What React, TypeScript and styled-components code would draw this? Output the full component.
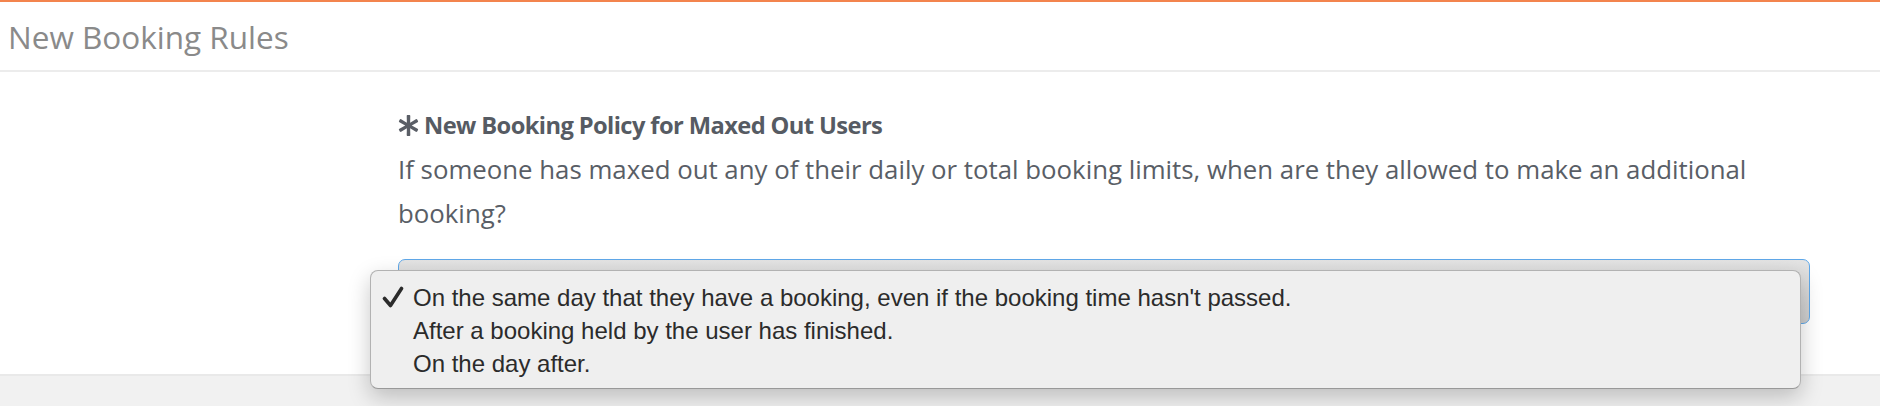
import React from "react";
import styled, { createGlobalStyle } from "styled-components";
import { FaAsterisk } from "react-icons/fa";

const Global = createGlobalStyle`
  html, body { margin: 0; padding: 0; background: #ffffff; }
  body { font-family: "Open Sans", "Liberation Sans", sans-serif; }
`;

const Page = styled.div`
  width: 1880px;
  height: 406px;
  display: flex;
  flex-direction: column;
  overflow: hidden;
  background: #f1f1f1;
`;

const Panel = styled.section`
  background: #ffffff;
  border-top: 2px solid #f3844e;
  border-bottom: 2px solid #e9e9e9;
`;

const Header = styled.header`
  height: 68px;
  display: flex;
  align-items: center;
  padding-left: 8px;
  border-bottom: 2px solid #ececec;
  font-family: "Open Sans", sans-serif;
  font-size: 31.5px;
  color: #8a8a8a;
`;

const Body = styled.div`
  display: grid;
  grid-template-columns: 398px 1412px 1fr;
  padding-top: 39px;
  padding-bottom: 50px;
`;

const Field = styled.div`
  grid-column: 2;
  display: flex;
  flex-direction: column;
`;

const Label = styled.label`
  display: flex;
  align-items: center;
  gap: 5px;
  height: 28px;
  font-family: "Open Sans", sans-serif;
  font-weight: 700;
  font-size: 23.7px;
  letter-spacing: -0.6px;
  color: #565b63;
`;

const Help = styled.p`
  margin: 8px 0 24px;
  font-family: "Open Sans", sans-serif;
  font-size: 25.8px;
  line-height: 44px;
  color: #595e66;
`;

const SelectBox = styled.div`
  position: relative;
  height: 63px;
  border: 1px solid #5fa8e9;
  border-radius: 7px;
  background: linear-gradient(#e4e4e4, #cdcdcd);
`;

const Menu = styled.ul`
  position: absolute;
  left: -29px;
  right: 8px;
  top: 10px;
  margin: 0;
  padding: 10px 0 8px;
  list-style: none;
  background: #efefef;
  border: 1px solid #b2b2b2;
  border-bottom-color: #999999;
  border-radius: 8px;
  box-shadow: 0 8px 22px rgba(0, 0, 0, 0.22);
`;

const Item = styled.li`
  position: relative;
  height: 33px;
  display: flex;
  align-items: center;
  padding-left: 42px;
  font-family: "Liberation Sans", Arial, sans-serif;
  font-size: 24px;
  color: #2b2b2b;
`;

const Check = styled.svg`
  position: absolute;
  left: 11px;
  top: 5px;
  width: 22px;
  height: 22px;
`;

const options = [
  "On the same day that they have a booking, even if the booking time hasn't passed.",
  "After a booking held by the user has finished.",
  "On the day after.",
];

export default function App() {
  return (
    <>
      <Global />
      <Page>
        <Panel>
          <Header>New Booking Rules</Header>
          <Body>
            <Field>
              <Label>
                <FaAsterisk size={21} color="#5a5e66" />
                New Booking Policy for Maxed Out Users
              </Label>
              <Help>
                If someone has maxed out any of their daily or total booking limits, when are they allowed to make an additional booking?
              </Help>
              <SelectBox>
                <Menu>
                  {options.map((o, i) => (
                    <Item key={o}>
                      {i === 0 && (
                        <Check viewBox="0 0 22 22">
                          <path d="M2.5 12.5 L8.5 19.5 L19.5 2.5" fill="none" stroke="#2b2b2b" strokeWidth="3.6" strokeLinecap="round" strokeLinejoin="round" />
                        </Check>
                      )}
                      {o}
                    </Item>
                  ))}
                </Menu>
              </SelectBox>
            </Field>
          </Body>
        </Panel>
      </Page>
    </>
  );
}
